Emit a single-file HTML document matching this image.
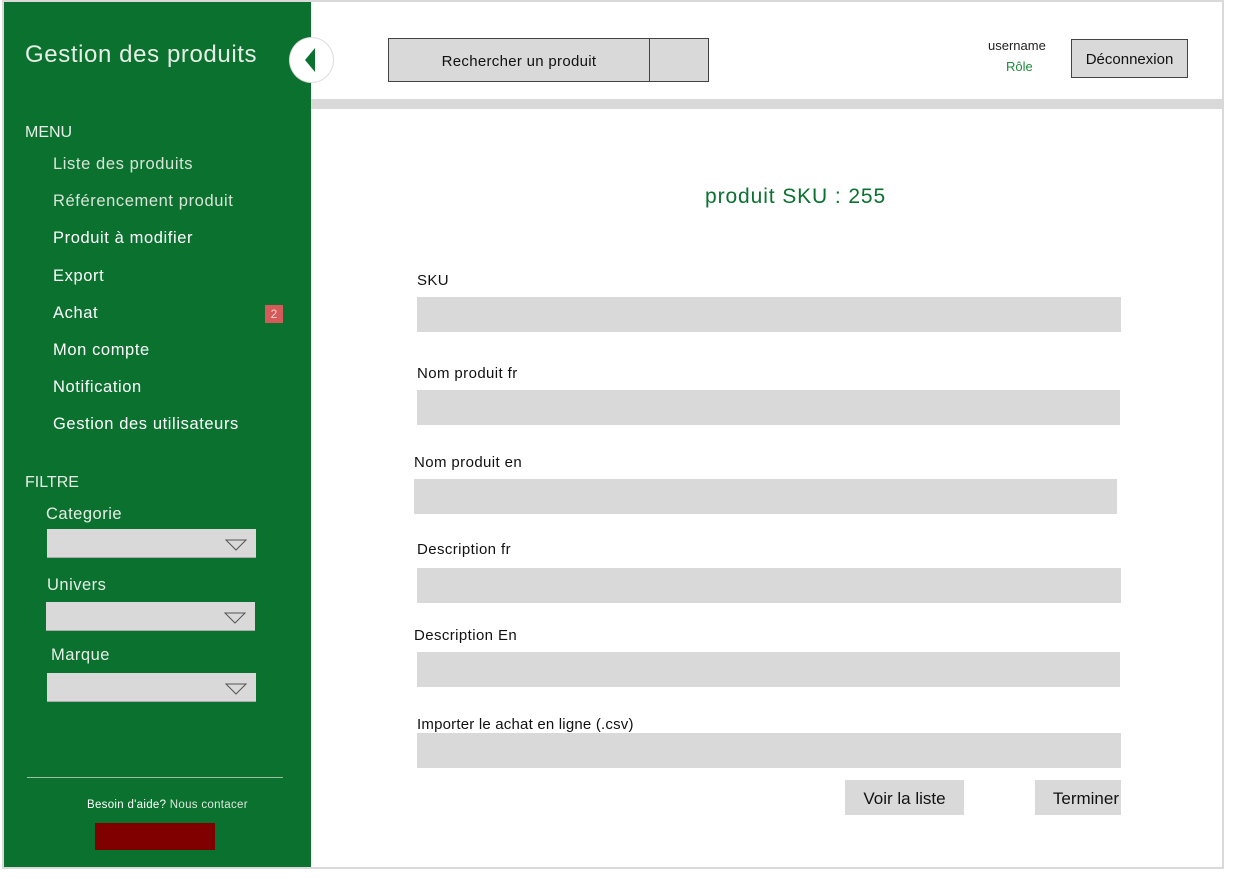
<!DOCTYPE html>
<html><head><meta charset="utf-8"><style>
*{margin:0;padding:0;box-sizing:border-box}
body{width:1236px;height:878px;background:#fff;position:relative;overflow:hidden;font-family:"Liberation Sans","DejaVu Sans",sans-serif}
.a{position:absolute}
.frame{left:2px;top:0;width:1222px;height:869px;border:2px solid #d9d9d9;border-left-width:3px;background:#fff}
.side{left:4px;top:2px;width:307px;height:865px;background:#0a712f}
.w{color:#fff;white-space:nowrap}
.m{font-size:16.5px;left:53px;letter-spacing:0.6px}
.dim{color:#d8e4d8}
.sel{left:47px;width:209px;height:29px;background:#d9d9d9;border-bottom:1px solid #aaa}
.sel svg{position:absolute;right:9px;top:10px}
.lbl{font-size:15px;color:#111;white-space:nowrap;letter-spacing:0.4px}
.in{background:#d9d9d9;height:35px}
.btn{background:#d9d9d9;font-size:16px;color:#111;text-align:center}
</style></head><body>
<div class="a frame"></div>
<div class="a side"></div>
<div class="a w" style="left:25px;top:41px;font-size:24px;color:#e6eee6;letter-spacing:0.6px">Gestion des produits</div>
<div class="a" style="left:289px;top:37px;width:45px;height:46px;border-radius:50%;background:#fff;border:1px solid #ddd"></div>
<svg class="a" style="left:303px;top:48px" width="14" height="24"><path d="M12 0 L12 24 L2 12 Z" fill="#0a712f"/></svg>
<div class="a w" style="left:25px;top:124px;font-size:16px;color:#e6eee6">MENU</div>
<div class="a w m dim" style="top:155px">Liste des produits</div>
<div class="a w m dim" style="top:192px">Référencement produit</div>
<div class="a w m" style="top:229px">Produit à modifier</div>
<div class="a w m" style="top:267px">Export</div>
<div class="a w m" style="top:304px">Achat</div>
<div class="a" style="left:265px;top:305px;width:18px;height:18px;background:#d55a5a;color:#f4d0d0;font-size:12px;text-align:center;line-height:18px">2</div>
<div class="a w m" style="top:341px">Mon compte</div>
<div class="a w m" style="top:378px">Notification</div>
<div class="a w m" style="top:415px">Gestion des utilisateurs</div>
<div class="a w" style="left:25px;top:474px;font-size:16px;color:#e6eee6">FILTRE</div>
<div class="a w" style="left:46px;top:505px;font-size:16.5px;color:#e6eee6;letter-spacing:0.5px">Categorie</div>
<div class="a sel" style="top:529px"><svg width="22" height="12"><path d="M1 1 L21 1 L11 11 Z" fill="none" stroke="#555"/></svg></div>
<div class="a w" style="left:47px;top:576px;font-size:16.5px;color:#e6eee6;letter-spacing:0.5px">Univers</div>
<div class="a sel" style="top:602px;left:46px"><svg width="22" height="12"><path d="M1 1 L21 1 L11 11 Z" fill="none" stroke="#555"/></svg></div>
<div class="a w" style="left:51px;top:646px;font-size:16.5px;color:#e6eee6;letter-spacing:0.5px">Marque</div>
<div class="a sel" style="top:673px"><svg width="22" height="12"><path d="M1 1 L21 1 L11 11 Z" fill="none" stroke="#555"/></svg></div>
<div class="a" style="left:27px;top:777px;width:256px;height:1px;background:#9cbfa4"></div>
<div class="a w" style="left:87px;top:799px;font-size:11.5px;letter-spacing:0.3px">Besoin d'aide? <span style="color:#dde8dd">Nous contacer</span></div>
<div class="a" style="left:95px;top:823px;width:120px;height:27px;background:#800000"></div>

<div class="a" style="left:311px;top:99px;width:911px;height:10px;background:#d9d9d9"></div>
<div class="a btn" style="left:388px;top:38px;width:262px;height:44px;line-height:45px;border:1px solid #444;font-size:15px;letter-spacing:0.3px">Rechercher un produit</div>
<div class="a btn" style="left:649px;top:38px;width:60px;height:44px;border:1px solid #444"></div>
<div class="a" style="left:988px;top:38px;font-size:13px;color:#222">username</div>
<div class="a" style="left:1006px;top:59px;font-size:13px;color:#1f8a3a">Rôle</div>
<div class="a btn" style="left:1071px;top:39px;width:117px;height:39px;line-height:39px;border:1px solid #444;font-size:15px">Déconnexion</div>

<div class="a" style="left:705px;top:185px;font-size:21px;color:#0a712f;white-space:nowrap;letter-spacing:0.9px">produit SKU : 255</div>
<div class="a lbl" style="left:417px;top:272px">SKU</div>
<div class="a in" style="left:417px;top:297px;width:704px"></div>
<div class="a lbl" style="left:417px;top:365px">Nom produit fr</div>
<div class="a in" style="left:417px;top:390px;width:703px"></div>
<div class="a lbl" style="left:414px;top:454px">Nom produit en</div>
<div class="a in" style="left:414px;top:479px;width:703px"></div>
<div class="a lbl" style="left:417px;top:541px">Description fr</div>
<div class="a in" style="left:417px;top:568px;width:704px"></div>
<div class="a lbl" style="left:414px;top:627px">Description En</div>
<div class="a in" style="left:417px;top:652px;width:703px"></div>
<div class="a lbl" style="left:417px;top:716px;letter-spacing:0.2px">Importer le achat en ligne (.csv)</div>
<div class="a in" style="left:417px;top:733px;width:704px"></div>
<div class="a btn" style="left:845px;top:780px;width:119px;height:35px;line-height:37px;font-size:17px">Voir la liste</div>
<div class="a btn" style="left:1035px;top:780px;width:86px;height:35px;line-height:37px;font-size:17px;text-align:right;padding-right:2px">Terminer</div>
</body></html>
